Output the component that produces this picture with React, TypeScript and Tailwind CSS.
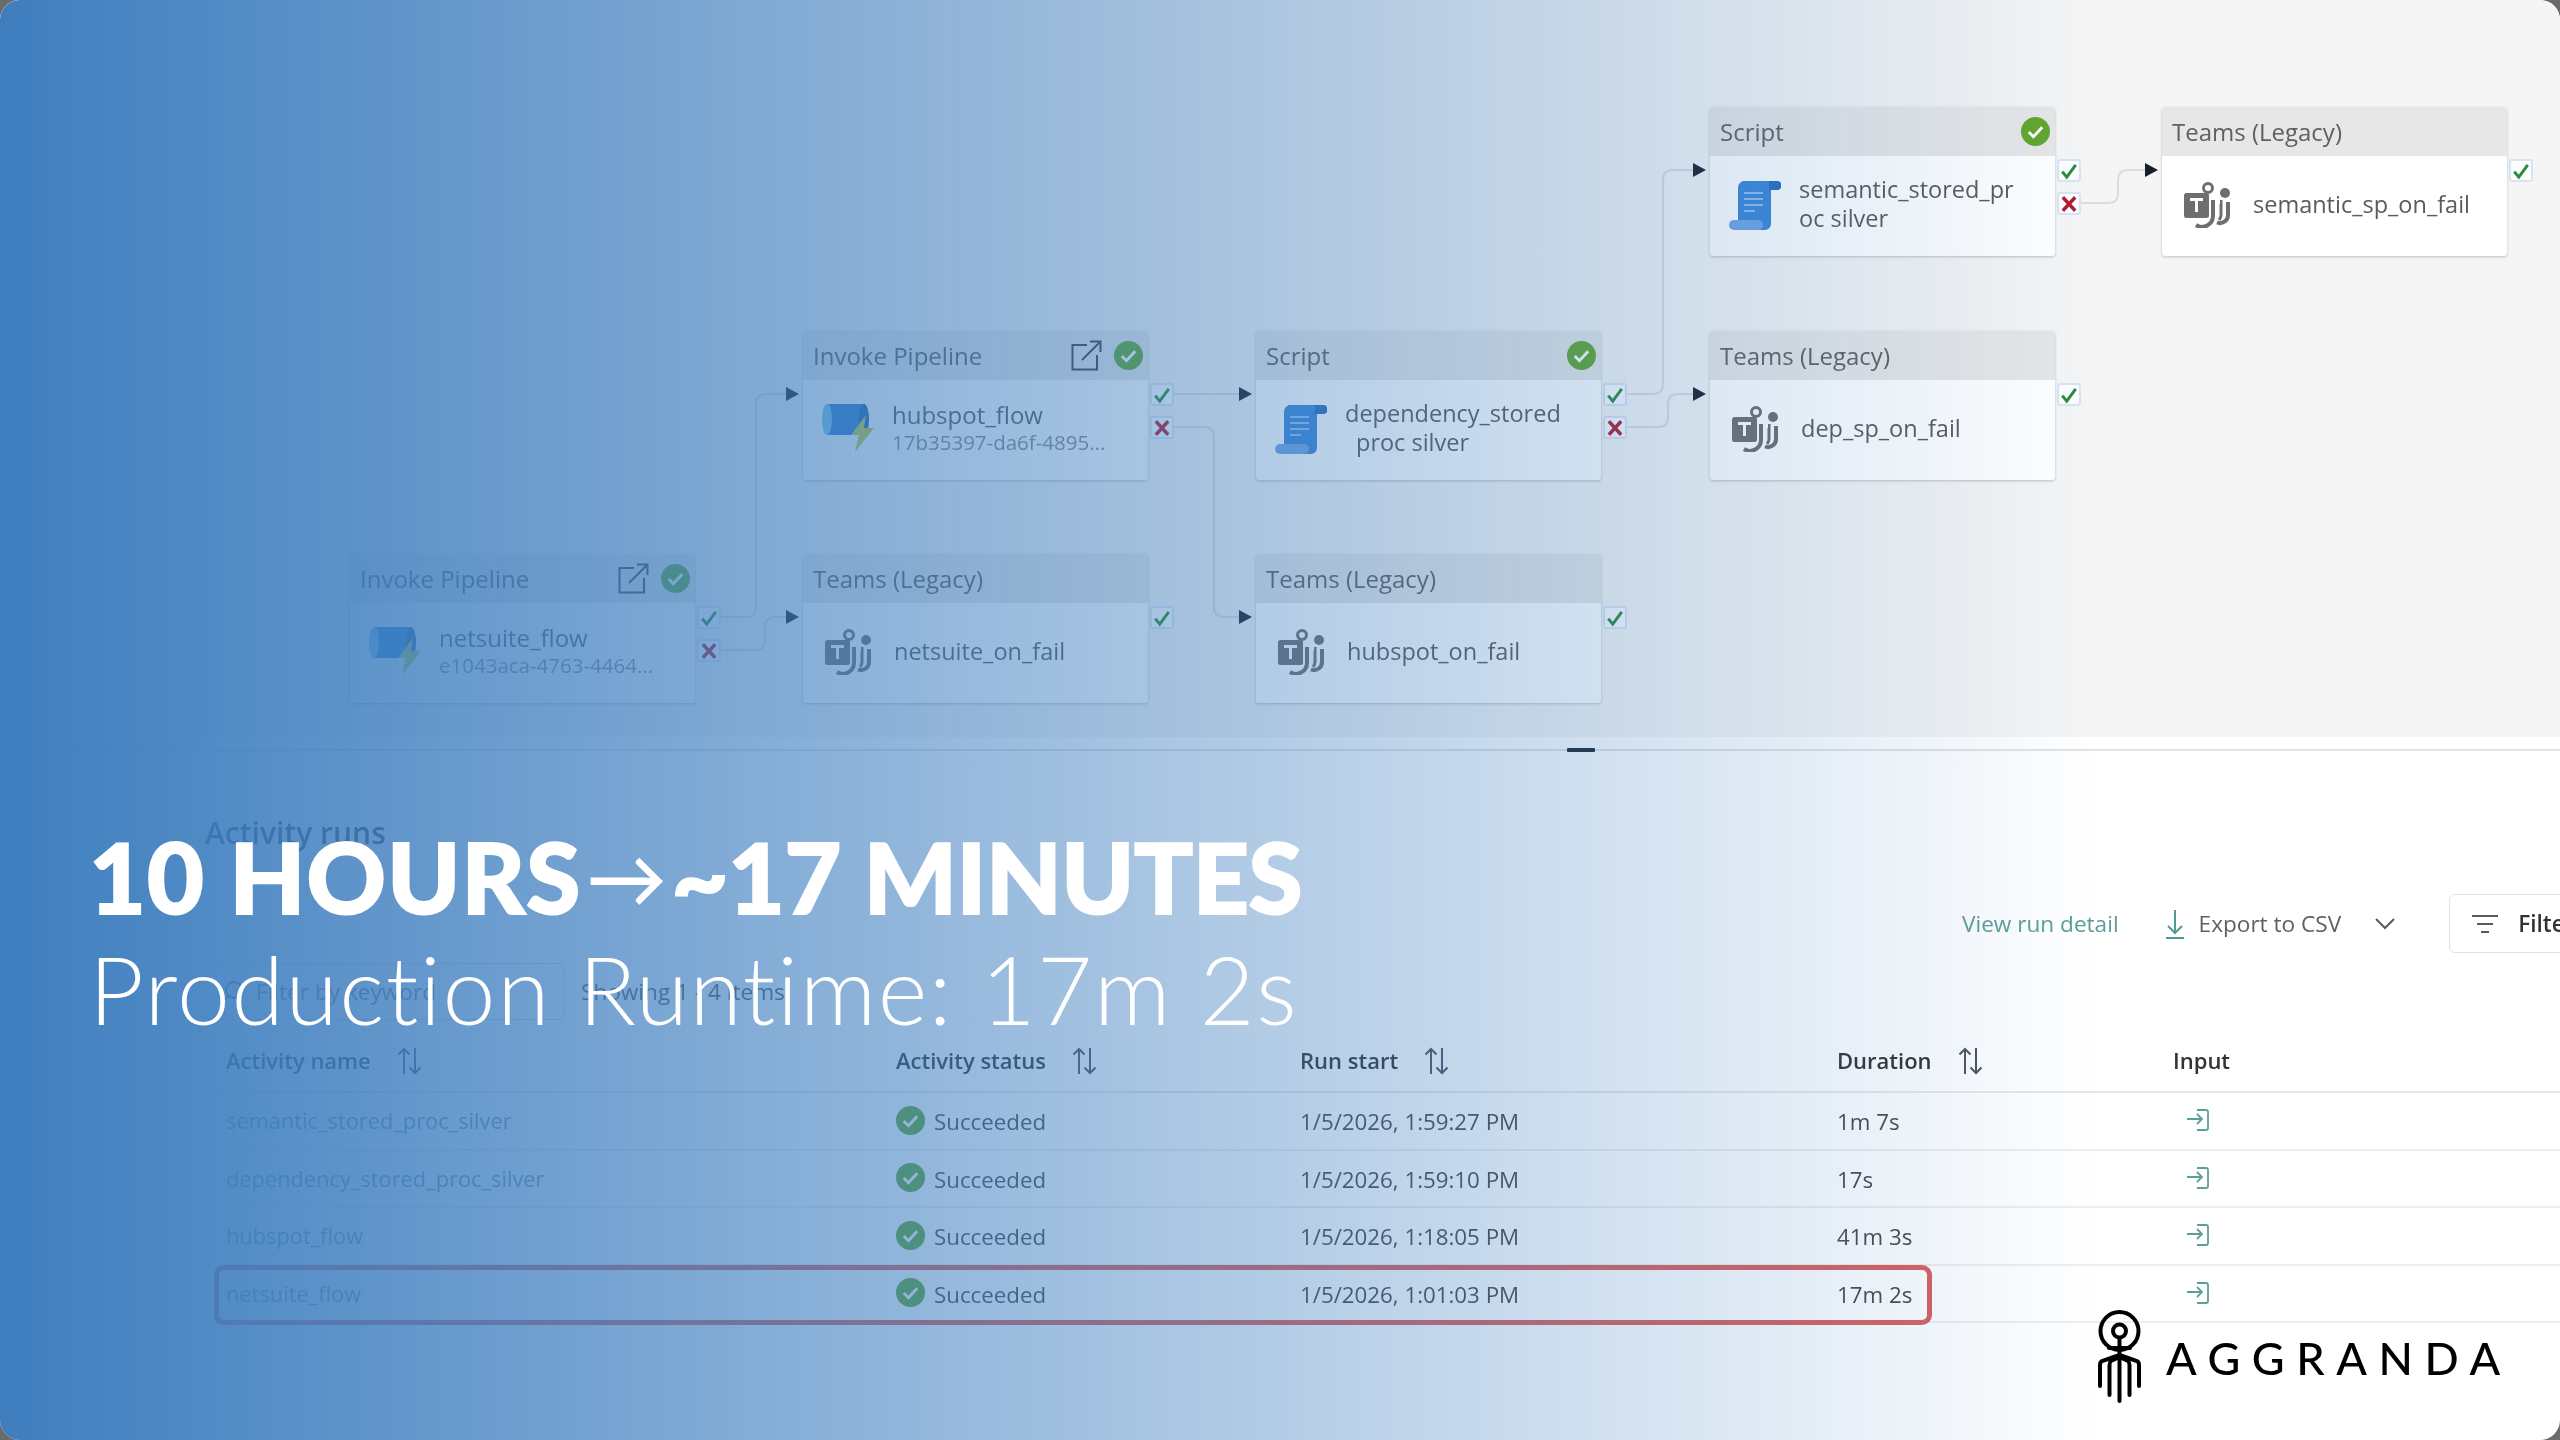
import React from 'react';

type Kind = 'script' | 'teams' | 'invoke';

interface PipelineNodeProps {
  kind: Kind;
  pos: string;
  title: string;
  lines: React.ReactNode[];
  status?: boolean;
  failPort?: boolean;
  noInput?: boolean;
}

const CheckCircle = ({ className }: { className: string }) => (
  <svg viewBox="0 0 28 28" className={className}>
    <circle cx="14" cy="14" r="14" fill="#62a72e" />
    <path d="M7.500 14.500l4.500 4.500 8.500-9" fill="none" stroke="#fff" strokeWidth="2.800" />
  </svg>
);

const ExternalIcon = () => (
  <svg viewBox="0 0 31 31" className="w-[31px] h-[31px] mr-[12px]" fill="none" stroke="#3f3f3f" strokeWidth="2">
    <path d="M16 5H1.500v24.500H26V15" />
    <path d="M11 20L29.500 1.500" />
    <path d="M19 1.500h10.500V12" />
  </svg>
);

const ScriptIcon = () => (
  <svg viewBox="0 0 52 49" className="w-[52px] h-[49px] shrink-0">
    <path d="M14 0H48a4 4 0 0 1 0 9H42V43a6 6 0 0 1-6 6H9V8a8 8 0 0 1 5-8z" fill="#3b86d8" />
    <path d="M40 0h8a4 4 0 0 1 0 9h-8z" fill="#2a6dc0" />
    <rect x="0" y="39" width="34" height="10" rx="5" fill="#6ea5e6" />
    <path d="M15 12h19M15 18h19M15 24h19M15 30h11" stroke="#8fbdf0" strokeWidth="2" />
  </svg>
);

const TeamsIcon = () => (
  <svg viewBox="0 0 47 46" className="w-[47px] h-[46px] shrink-0">
    <circle cx="24" cy="6" r="4.500" fill="none" stroke="#6e6e6e" strokeWidth="3" />
    <circle cx="41" cy="11" r="5" fill="#6e6e6e" />
    <path d="M29 18V34a11 11 0 0 1-17 9" fill="none" stroke="#6e6e6e" strokeWidth="4" />
    <path d="M36 20h2.500M44 20V33a8 8 0 0 1-11 7.500" fill="none" stroke="#6e6e6e" strokeWidth="4" />
    <path d="M37 22V33a7 7 0 0 1-2 5" fill="none" stroke="#6e6e6e" strokeWidth="3" />
    <rect x="0" y="11" width="25" height="25" rx="2.500" fill="#6e6e6e" />
    <path d="M6 17.500h13M12.500 17.500V30" stroke="#fff" strokeWidth="3" fill="none" />
  </svg>
);

const PipelineIcon = () => (
  <svg viewBox="0 0 52 49" className="w-[52px] h-[49px] shrink-0">
    <rect x="5" y="0" width="38" height="31" fill="#2f7bd0" />
    <ellipse cx="42" cy="15.500" rx="5" ry="15.500" fill="#1f62b0" />
    <ellipse cx="5" cy="15.500" rx="5" ry="15.500" fill="#7cc6ec" />
    <path d="M44 11L29 31h8l-4 17 19-24H42z" fill="#c8cb3c" />
  </svg>
);

// success / failure ports on the right edge of a node
const Port = ({ fail, className }: { fail?: boolean; className: string }) => (
  <div className={`absolute left-[347px] w-[24px] h-[23px] rounded-[3px] bg-[#fcfdff] border-2 border-[#d8e4f6] flex items-center justify-center ${className}`}>
    <svg viewBox="0 0 16 16" className="w-[18px] h-[18px]" fill="none">
      {fail ? (
        <path d="M2.500 2l11 12M13.500 2l-11 12" stroke="#b01c2e" strokeWidth="3" />
      ) : (
        <path d="M2 8.500l4 5 8-11" stroke="#2d8a3a" strokeWidth="2.600" />
      )}
    </svg>
  </div>
);

const PipelineNode: React.FC<PipelineNodeProps> = ({ kind, pos, title, lines, status, failPort, noInput }) => (
  <div className={`absolute w-[345px] h-[149px] rounded-[3px] bg-white shadow-[0_1px_3px_rgba(0,0,0,0.22)] ${pos}`}>
    <div className="h-[49px] bg-[#e7e7e7] rounded-t-[3px] flex items-center pl-[10px] pr-[5px] text-[24px] text-[#606060]">
      <span className="flex-1">{title}</span>
      {kind === 'invoke' && <ExternalIcon />}
      {status && <CheckCircle className="w-[29px] h-[29px]" />}
    </div>
    {kind === 'teams' && (
      <div className="flex items-center gap-[22px] pl-[22px] pt-[25px] text-[23.500px] leading-[46px] text-[#5a5a5a]">
        <TeamsIcon />
        <span className="mb-[2px]">{lines[0]}</span>
      </div>
    )}
    {kind === 'script' && (
      <div className="flex items-center gap-[18px] pl-[19px] pt-[19px]">
        <ScriptIcon />
        <div className="mb-[2px] text-[23.500px] leading-[29px] text-[#5a5a5a] whitespace-nowrap">
          {lines.map((line, i) => (
            <div key={i}>{line}</div>
          ))}
        </div>
      </div>
    )}
    {kind === 'invoke' && (
      <div className="flex items-center gap-[18px] pl-[19px] pt-[22px]">
        <PipelineIcon />
        <div className="text-[24px] leading-[26px] text-[#5a5a5a] whitespace-nowrap">
          {lines.map((line, i) => (
            <div key={i}>{line}</div>
          ))}
        </div>
      </div>
    )}
    {!noInput && (
      <svg viewBox="0 0 13 14" className="absolute -left-[17px] top-[56px] w-[13px] h-[14px]">
        <path d="M0 0l13 7-13 7z" fill="#171f2b" />
      </svg>
    )}
    <Port className="top-[52px]" />
    {failPort && <Port fail className="top-[85px]" />}
  </div>
);

const SortIcon = () => (
  <svg viewBox="0 0 24 28" className="w-[24px] h-[28px] shrink-0" fill="none" stroke="#4a5560" strokeWidth="2">
    <path d="M7 27V2M1.500 7.500L7 2l5.500 5.500" />
    <path d="M18 1v25M12.500 20.500L18 26l5.500-5.500" />
  </svg>
);

const InputIcon = () => (
  <svg viewBox="0 0 24 24" className="w-[24px] h-[24px] ml-[13px] -mt-[3px]" fill="none" stroke="#5f9f99" strokeWidth="1.800">
    <path d="M1 11h15M11 6l5 5-5 5" />
    <path d="M11 2h9a2 2 0 0 1 2 2v16a2 2 0 0 1-2 2h-9" />
  </svg>
);

const rows = [
  { name: 'semantic_stored_proc_silver', start: '1/5/2026, 1:59:27 PM', duration: '1m 7s' },
  { name: 'dependency_stored_proc_silver', start: '1/5/2026, 1:59:10 PM', duration: '17s' },
  { name: 'hubspot_flow', start: '1/5/2026, 1:18:05 PM', duration: '41m 3s' },
  { name: 'netsuite_flow', start: '1/5/2026, 1:01:03 PM', duration: '17m 2s' },
];

export default function App() {
  return (
    <div className="w-[2560px] h-[1440px] bg-[#6b6b6b] overflow-hidden font-['Open_Sans',sans-serif]">
      <div className="relative w-full h-full rounded-[20px] overflow-hidden bg-white">
        {/* Pipeline canvas */}
        <div className="relative h-[737px] bg-[#f5f5f5] blur-[0.5px]">
          <svg viewBox="0 0 2560 737" className="absolute inset-0 w-[2560px] h-[737px]" fill="none" stroke="#dcdcdc" strokeWidth="2">
            <path d="M720 617H746q10 0 10-10V404q0-10 10-10H786" />
            <path d="M720 650H755q10 0 10-10V627q0-10 10-10H786" />
            <path d="M1173 394H1239" />
            <path d="M1173 427H1204q10 0 10 10V607q0 10 10 10H1239" />
            <path d="M1626 394H1653q10 0 10-10V180q0-10 10-10H1693" />
            <path d="M1626 427H1658q10 0 10-10V404q0-10 10-10H1693" />
            <path d="M2080 203H2108q10 0 10-10V180q0-10 10-10H2145" />
          </svg>
          <PipelineNode kind="invoke" pos="left-[350px] top-[554px]" title="Invoke Pipeline" status failPort noInput lines={['netsuite_flow', <span className="text-[20.500px] text-[#8a8a8a]">e1043aca-4763-4464...</span>]} />
          <PipelineNode kind="invoke" pos="left-[803px] top-[331px]" title="Invoke Pipeline" status failPort lines={['hubspot_flow', <span className="text-[20.500px] text-[#8a8a8a]">17b35397-da6f-4895...</span>]} />
          <PipelineNode kind="teams" pos="left-[803px] top-[554px]" title="Teams (Legacy)" lines={['netsuite_on_fail']} />
          <PipelineNode kind="script" pos="left-[1256px] top-[331px]" title="Script" status failPort lines={['dependency_stored', <span className="pl-[11px]">proc silver</span>]} />
          <PipelineNode kind="teams" pos="left-[1256px] top-[554px]" title="Teams (Legacy)" lines={['hubspot_on_fail']} />
          <PipelineNode kind="script" pos="left-[1710px] top-[107px]" title="Script" status failPort lines={['semantic_stored_pr', 'oc silver']} />
          <PipelineNode kind="teams" pos="left-[1710px] top-[331px]" title="Teams (Legacy)" lines={['dep_sp_on_fail']} />
          <PipelineNode kind="teams" pos="left-[2162px] top-[107px]" title="Teams (Legacy)" lines={['semantic_sp_on_fail']} />
        </div>

        {/* Splitter */}
        <div className="relative h-[26px] flex items-center pl-[1567px]">
          <div className="absolute inset-x-0 h-[2px] bg-[#e3e3e3]" />
          <div className="relative w-[28px] h-[4px] bg-[#1b2733] rounded-[1px]" />
        </div>

        {/* Activity runs */}
        <div className="pl-[205px] blur-[0.5px]">
          <h2 className="pt-[50px] h-[90px] text-[30px] leading-[40px] font-semibold text-[#333]">Activity runs</h2>
          <div className="mt-[41px] h-[59px] flex items-center pl-[1757px] whitespace-nowrap text-[22.600px]">
            <span className="text-[#5d9d97]">View run detail</span>
            <svg viewBox="0 0 20 30" className="w-[20px] h-[30px] ml-[46px] shrink-0" fill="none" stroke="#4f9a92" strokeWidth="2">
              <path d="M10 1v23M3 17l7 7 7-7M1 29h18" />
            </svg>
            <span className="ml-[14px] text-[#5f5f5f]">Export to CSV</span>
            <div className="ml-[16px] w-[2px] h-[26px] bg-[#d4d4d4]" />
            <svg viewBox="0 0 20 12" className="ml-[18px] w-[20px] h-[12px] shrink-0" fill="none" stroke="#5a5a5a" strokeWidth="2">
              <path d="M1 1l9 9 9-9" />
            </svg>
            <div className="ml-[54px] w-[200px] h-[59px] shrink-0 border border-[#e0e0e0] rounded-[6px] flex items-center pl-[22px] gap-[20px]">
              <svg viewBox="0 0 26 20" className="w-[26px] h-[20px] shrink-0" fill="none" stroke="#5a5a5a" strokeWidth="2">
                <path d="M0 2h26M5 10h16M9 18h8" />
              </svg>
              <span className="font-semibold text-[#333]">Filter</span>
            </div>
          </div>
          <div className="mt-[10px] h-[57px] flex items-center gap-[16px] text-[22.600px]">
            <div className="w-[360px] h-[57px] border border-[#d8d8d8] rounded-[6px] flex items-center pl-[14px] gap-[12px] text-[#777]">
              <svg viewBox="0 0 24 24" className="w-[24px] h-[24px]" fill="none" stroke="#666" strokeWidth="2">
                <circle cx="14" cy="10" r="8" />
                <path d="M8 16l-7 7" />
              </svg>
              <span>Filter by keyword</span>
            </div>
            <span className="text-[#555]">Showing 1 - 4 items</span>
          </div>

          {/* Table */}
          <div className="mt-[9px]">
            <div className="h-[64px] pt-[1px] grid grid-cols-[670px_404px_537px_336px_1fr] items-center pl-[21px] border-b-2 border-[#e8e8e8] font-semibold text-[22px] text-[#333]">
              <div className="flex items-center gap-[26px]">Activity name <SortIcon /></div>
              <div className="flex items-center gap-[26px]">Activity status <SortIcon /></div>
              <div className="flex items-center gap-[26px]">Run start <SortIcon /></div>
              <div className="flex items-center gap-[26px]">Duration <SortIcon /></div>
              <div>Input</div>
            </div>
            {rows.map((row, i) => (
              <div key={row.name} className="relative h-[57.500px] pt-[2px] grid grid-cols-[670px_404px_537px_336px_1fr] items-center pl-[21px] border-b-2 border-[#eeeeee] text-[22.300px] text-[#4a4a4a]">
                <div className="text-[21.800px] text-[#6a9c98]">{row.name}</div>
                <div className="flex items-center gap-[9px]">
                  <CheckCircle className="w-[29px] h-[29px] -mt-[3px]" />
                  <span>Succeeded</span>
                </div>
                <div>{row.start}</div>
                <div>{row.duration}</div>
                <div><InputIcon /></div>
                {i === 3 && (
                  <div className="absolute left-[9px] -top-[1px] w-[1718px] h-[60px] border-[5px] border-[#d9605e] rounded-[10px]" />
                )}
              </div>
            ))}
          </div>
        </div>

        {/* Blue wash over the left of the page */}
        <div className="absolute inset-0 bg-[linear-gradient(to_right,#3e7ebf_0%,#3e7ebf00_82%)]" />

        {/* Headline */}
        <div className="absolute left-[89px] top-[821px] text-white font-['Lato',sans-serif] whitespace-nowrap">
          <div className="text-[98px] leading-[110px] font-black [-webkit-text-stroke:2px_white]">
            <span className="tracking-[1.200px]">10 HOURS</span>
            <span className="mx-[5px] text-[80px] font-normal align-[7px] [-webkit-text-stroke:1px_white]">→</span>
            <span className="tracking-[-0.400px]">~17 MINUTES</span>
          </div>
          <div className="text-[95px] leading-[114px] font-light tracking-[1.600px]">Production Runtime: 17m 2s</div>
        </div>

        {/* Logo */}
        <div className="absolute left-[2098px] top-[1310px] flex items-center gap-[25px]">
          <svg viewBox="0 0 43 93" className="w-[43px] h-[93px]" fill="none" stroke="#000" strokeWidth="4" strokeLinecap="round">
            <circle cx="21.500" cy="21" r="19" />
            <circle cx="21.500" cy="21" r="6.500" />
            <path d="M21.500 28V91" />
            <path d="M11 38L32 38" />
            <path d="M21.500 45L4 51Q2 52 2 55V76" />
            <path d="M21.500 45L39 51Q41 52 41 55V76" />
            <path d="M21.500 47L13 51Q11.500 52 11.500 55V85" />
            <path d="M21.500 47L30 51Q31.500 52 31.500 55V85" />
          </svg>
          <span className="font-['Lato',sans-serif] text-[45px] font-medium text-black tracking-[11.600px] leading-none mt-[3px]">AGGRANDA</span>
        </div>
      </div>
    </div>
  );
}
